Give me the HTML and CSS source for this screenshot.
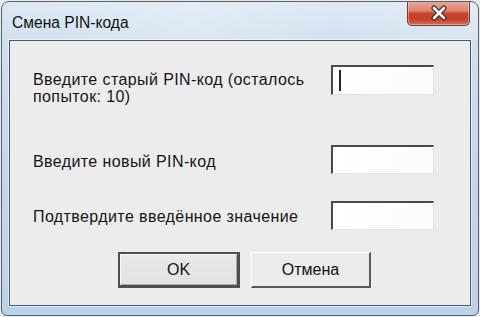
FILE: index.html
```html
<!DOCTYPE html>
<html lang="ru">
<head>
<meta charset="utf-8">
<title>Смена PIN-кода</title>
<link rel="stylesheet" href="styles.css">
</head>
<body>
<div class="window">
  <div class="titlebar">
    <span class="title">Смена PIN-кода</span>
    <div class="close">
      <svg width="20" height="16" viewBox="0 0 20 16">
        <path d="M5 3 L15 13 M15 3 L5 13" stroke="#3a2a28" stroke-width="5" stroke-linecap="round" fill="none"/>
        <path d="M5 3 L15 13 M15 3 L5 13" stroke="#ffffff" stroke-width="2.6" stroke-linecap="round" fill="none"/>
      </svg>
    </div>
  </div>
  <div class="content">
    <div class="row row1">
      <div class="label">Введите старый PIN-код (осталось<br>попыток: 10)</div>
      <div class="field"><span class="caret"></span></div>
    </div>
    <div class="row row2">
      <div class="label">Введите новый PIN-код</div>
      <div class="field"></div>
    </div>
    <div class="row row3">
      <div class="label">Подтвердите введённое значение</div>
      <div class="field"></div>
    </div>
    <div class="buttons">
      <div class="btn btn-default">OK</div>
      <div class="btn">Отмена</div>
    </div>
  </div>
</div>
</body>
</html>
```

FILE: styles.css
```css
html, body {
  margin: 0;
  padding: 0;
}
body {
  width: 480px;
  height: 317px;
  background: #e9e9e9;
  font-family: "Liberation Sans", Arial, sans-serif;
  font-size: 16px;
  color: #151515;
  overflow: hidden;
}
.window {
  box-sizing: border-box;
  width: 478px;
  height: 315px;
  margin: 1px;
  border: 1px solid #56626f;
  border-radius: 8px 8px 6px 6px;
  background: linear-gradient(to bottom, #dde8f3 0%, #d0e0f0 12%, #c6d9ed 40%, #bcd2ea 100%);
  display: flex;
  flex-direction: column;
  overflow: hidden;
}
.titlebar {
  height: 38px;
  flex: none;
  display: flex;
  align-items: flex-start;
  padding-left: 10px;
  background: linear-gradient(to right, rgba(255,255,255,0.0) 0%, rgba(255,255,255,0.25) 40%, rgba(255,255,255,0.05) 70%, rgba(255,255,255,0.2) 100%);
}
.title {
  margin-top: 12px;
  line-height: 17px;
  font-size: 15.6px;
  color: #101010;
}
.close {
  margin-left: auto;
  margin-right: 8px;
  margin-top: -1px;
  width: 61px;
  height: 24px;
  border: 1px solid #7a3a30;
  border-top: none;
  border-radius: 0 0 5px 5px;
  background: linear-gradient(to bottom, #eaa99a 0%, #dc8672 40%, #c6452e 52%, #c3412b 75%, #d46f57 100%);
  box-shadow: inset 0 0 0 1px rgba(255,255,255,0.35);
  display: flex;
  align-items: center;
  justify-content: center;
}
.content {
  flex: 1;
  margin: 0 7px 9px 7px;
  border: 1px solid #485868;
  box-shadow: 0 0 0 1px rgba(255,255,255,0.55);
  background: #ececec;
  padding: 24px 0 0 23px;
}
.row {
  display: flex;
  align-items: flex-start;
}
.label {
  width: 298px;
  line-height: 17px;
  letter-spacing: 0.4px;
}
.row1 .label { margin-top: 6px; }
.row2 { margin-top: 40px; }
.row2 .label { margin-top: 8px; }
.row3 { margin-top: 27px; }
.row3 .label { margin-top: 7px; }
.field {
  box-sizing: border-box;
  width: 103px;
  height: 29px;
  background: linear-gradient(to right, #ffffff 0%, #fbfbfb 100%);
  border-top: 2px solid #4a4a4a;
  border-left: 2px solid #4a4a4a;
  border-right: 1px solid #e2e2e2;
  border-bottom: 1px solid #e2e2e2;
  display: flex;
  align-items: flex-start;
}
.row1 .field { height: 30px; }
.caret {
  width: 2px;
  height: 21px;
  margin: 3px 0 0 6px;
  background: #222;
}
.buttons {
  display: flex;
  gap: 11px;
  margin-top: 22px;
  padding-left: 85px;
}
.btn {
  box-sizing: border-box;
  width: 120px;
  height: 36px;
  display: flex;
  align-items: center;
  justify-content: center;
  background: #ececec;
  border-top: 1px solid #ffffff;
  border-left: 1px solid #ffffff;
  border-right: 2px solid #5a5a5a;
  border-bottom: 2px solid #5a5a5a;
  color: #111;
}
.btn-default {
  width: 122px;
  border: 2px solid #4e4e4e;
  border-right-width: 3px;
  border-bottom-width: 3px;
  background: linear-gradient(to bottom, #e9e9e9 0%, #e2e2e2 100%);
  box-shadow: inset 1px 1px 0 #fafafa, inset -1px -1px 0 #a8a8a8;
}
```
